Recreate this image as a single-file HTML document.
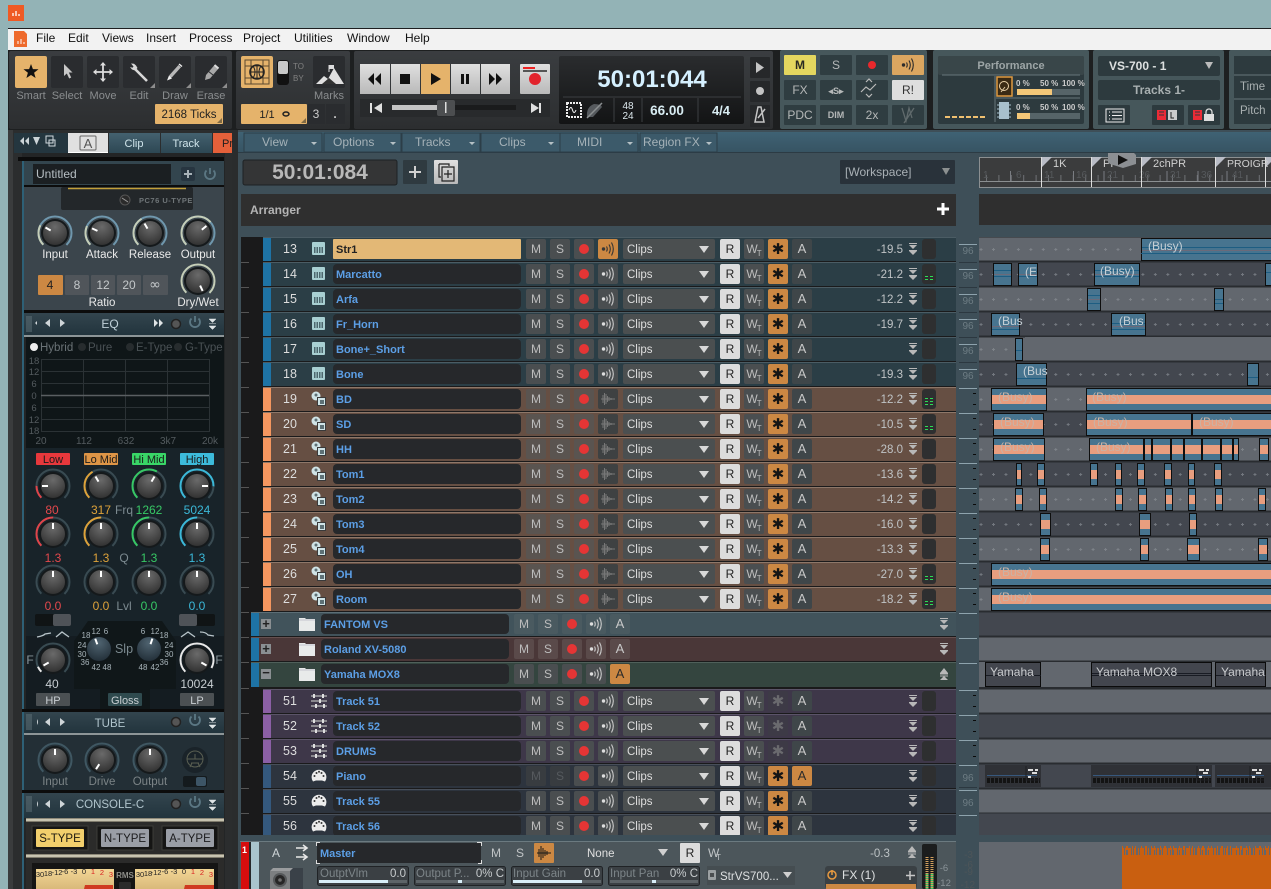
<!DOCTYPE html>
<html><head><meta charset="utf-8"><title>Console</title>
<style>
html,body{margin:0;padding:0;background:#93b3b6}
body{position:relative;width:1271px;height:889px;overflow:hidden;font-family:"Liberation Sans",sans-serif}
#s{position:absolute;left:0;top:0}
text{font-family:"Liberation Sans",sans-serif;font-size:11px;fill:#ccc}
.m{text-anchor:middle}.e{text-anchor:end}
.lb{fill:#8a8d8f;text-anchor:middle}
.pd{fill:url(#pg)}.pt2{fill:#46575b}.tb{fill:#2a2c2f}.o{fill:#e5b36b}
.gb{fill:url(#gb)}.ti{fill:#9a9a9a}
.q{fill:#2f3d41}.qt{fill:#b5b8b8;text-anchor:middle;font-size:12px}
.ri{fill:none;stroke-width:2}.pt{stroke:#fff;stroke-width:2;fill:none}
.w{fill:#e9e9e9;text-anchor:middle;font-size:11.5px}
.sc{font-size:8px;fill:#a8b4ba;text-anchor:middle}
.dk{fill:#7b8386;text-anchor:middle;font-size:11.5px}
.c{fill:#47748f;stroke:#0e0e0e;stroke-width:1}
.sal{stroke:#e89e7f;stroke-width:9;fill:none}
.ml{stroke:#1d5d82;stroke-width:1;fill:none}
.bz{font-size:12px;fill:#c6d0d6}
.bs{font-size:12px;fill:#c9b3a6}
.ya{font-size:12px;fill:#c9cbce}
.r{position:absolute;height:23px;border-top:1px solid var(--e);background:var(--g);--b:#4a4e50;box-sizing:content-box}
.r>*{position:absolute;top:1px;height:20px;font-style:normal;line-height:20px;display:block}
.t{left:263px;width:693px}.f{left:251px;width:705px}
.bl{--g:#2b3e46;--e:#4b5c64;--s:#1e73a5}
.or{--g:#664f43;--e:#8d7769;--s:#f4965f;--b:#5a5450}
.pu{--g:#3e3749;--e:#5b5468;--s:#8b5fa5}
.na{--g:#2d343e;--e:#484f59;--s:#34587d}
.fa{--g:#41535b;--e:#5c6e76;--s:#1e73a5}
.ro{--g:#4a3738;--e:#65504f;--s:#1e73a5;--b:#5a4a4a}
.ya2{--g:#34453f;--e:#4f605a;--s:#1e73a5}
.r>.st{left:0;top:0;width:8px;height:23px;background:var(--s)}
.r>.n{left:13px;width:28px;text-align:center;color:#ddd;font-size:12.5px}
.r>.ic{left:48px;top:3px;width:16px;height:16px}
.r>.nm{left:70px;width:188px;background:#26282b;border-radius:4px;color:#5c9fe6;font-weight:bold;font-size:11px;padding-left:3px;box-sizing:border-box;line-height:22px}
.r>.hl{background:#e3b876;color:#222;border-radius:1px}
.b{width:20px;background:var(--b);color:#bdbdbd;text-align:center;font-size:12px;border-radius:2px}
.a1{left:263px}.a2{left:287px}.a3{left:311px}.a4{left:335px}
.a3 u{position:absolute;left:5px;top:5px;width:10px;height:10px;border-radius:5px;background:#e53535}
.a4 svg{position:absolute;left:2px;top:2px;width:16px;height:16px}
.r>.cl{left:360px;width:92px;background:#4b4f50;color:#ddd;font-size:11.5px;padding-left:4px;box-sizing:border-box;border-radius:2px;line-height:22px}
.cl::after{content:"";position:absolute;right:6px;top:7px;border:5px solid transparent;border-top:7px solid #d8d8d8;border-bottom:0}
.r>.rr{left:457px;width:20px;background:#dcdcdc;color:#222;text-align:center;font-size:12px;border-radius:2px}
.wr{left:481px}.wr sub{font-size:8px;line-height:0;margin-left:-1px}
.r>.as{left:505px;width:20px;background:#cc8843;color:#151515;text-align:center;font-family:"DejaVu Sans",sans-serif;font-size:15px;border-radius:2px}
.r>.ag{background:#3d3a46;color:#6a6a6e}
.aa{left:529px;background:#3f4649;color:#c8c8c8;font-size:13px}
.aao{background:#cc8843!important;color:#2b2b2b!important}
.r>.v{right:53px;color:#c0c4c6;font-size:11.5px;text-align:right;line-height:22px}
.r>.ar{left:646px;top:5px;width:8px;height:12px}
.r>.mt{left:659px;width:14px;background:#2e2f30;border-radius:3px}
.l2::after,.l3::after{content:"";position:absolute;left:3px;top:15px;width:3px;height:1px;background:#2ddc55;box-shadow:5px 0 #2ddc55,0 -3px #2ddc55,5px -3px #2ddc55}
.l3::before{content:"";position:absolute;left:3px;top:9px;width:3px;height:1px;background:#2ddc55;box-shadow:5px 0 #2ddc55}
.r>.bx{left:10px;top:6px;width:10px;height:10px}
.r>.fo{left:48px;top:2px;width:16px;height:18px}
.f .aa{left:359px}
.f .ar{left:689px}
</style></head>
<body>
<svg id="s" width="1271" height="889" viewBox="0 0 1271 889" xmlns="http://www.w3.org/2000/svg">
<defs>
<linearGradient id="pg" x1="0" y1="0" x2="0" y2="1"><stop offset="0" stop-color="#3a3d40"/><stop offset="1" stop-color="#2c2e30"/></linearGradient>
<linearGradient id="gb" x1="0" y1="0" x2="0" y2="1"><stop offset="0" stop-color="#e0e0e0"/><stop offset="1" stop-color="#b9b9b9"/></linearGradient>
<linearGradient id="tab" x1="0" y1="0" x2="0" y2="1"><stop offset="0" stop-color="#44616f"/><stop offset="1" stop-color="#2d4753"/></linearGradient>
<linearGradient id="mn" x1="0" y1="0" x2="0" y2="1"><stop offset="0" stop-color="#3f6274"/><stop offset="1" stop-color="#375463"/></linearGradient>
<linearGradient id="dsp" x1="0" y1="0" x2="0" y2="1"><stop offset="0" stop-color="#2a2c2e"/><stop offset="1" stop-color="#131415"/></linearGradient>
<linearGradient id="hd" x1="0" y1="0" x2="0" y2="1"><stop offset="0" stop-color="#33454e"/><stop offset="1" stop-color="#22343d"/></linearGradient>
<linearGradient id="me" x1="0" y1="0" x2="0" y2="1"><stop offset="0" stop-color="#6f6a5c"/><stop offset=".5" stop-color="#e8e4cf"/><stop offset="1" stop-color="#5c584c"/></linearGradient>
<linearGradient id="vu" x1="0" y1="0" x2="0" y2="1"><stop offset="0" stop-color="#f2d695"/><stop offset="1" stop-color="#d9b97a"/></linearGradient>
<radialGradient id="k" cx=".5" cy=".25" r=".85"><stop offset="0" stop-color="#6a6a6a"/><stop offset="1" stop-color="#2b2b2b"/></radialGradient>
<radialGradient id="kb" cx=".5" cy=".25" r=".85"><stop offset="0" stop-color="#4f6370"/><stop offset="1" stop-color="#1e2a33"/></radialGradient>
<g id="K"><circle r="14" fill="#15191b"/><circle r="12" fill="url(#k)"/></g>
<g id="KB"><circle r="13" fill="#10171b"/><circle r="12" fill="url(#kb)"/></g>
<symbol id="sy" viewBox="0 0 16 16"><rect x="1" y="1" width="13" height="13" rx="1" fill="#a8cfd2"/><rect x="3" y="6" width="9" height="6" fill="#4d676e"/><path d="M5 6v6M7.500 6v6M10 6v6" stroke="#a8cfd2" stroke-width="1"/></symbol>
<symbol id="dr" viewBox="0 0 16 16"><circle cx="5" cy="5" r="4.500" fill="#cfe3e6"/><circle cx="5" cy="4" r="1.500" fill="#5d7075"/><rect x="6.500" y="6.500" width="8" height="8" fill="#cfe3e6" stroke="#3a3a3a"/><rect x="9" y="9" width="4" height="4" fill="#5d7075"/></symbol>
<symbol id="fa2" viewBox="0 0 16 16"><path d="M0 3h16M0 8h16M0 13h16" stroke="#b8b8b8" stroke-width="1.200"/><path d="M3 1v4M9 6v4M5 11v4M12 1v4M13 11v4" stroke="#e0e0e0" stroke-width="2"/></symbol>
<symbol id="mi" viewBox="0 0 16 16"><path d="M2 13.500A7.400 7.400 0 1 1 14 13.500L11 12.500H5z" fill="#ececec"/><circle cx="3.500" cy="8" r="1" fill="#333"/><circle cx="5.500" cy="5" r="1" fill="#333"/><circle cx="8" cy="3.800" r="1" fill="#333"/><circle cx="10.500" cy="5" r="1" fill="#333"/><circle cx="12.500" cy="8" r="1" fill="#333"/></symbol>
<symbol id="sp" viewBox="0 0 16 16"><circle cx="3.500" cy="8" r="1.700" fill="#ddd"/><path d="M6.500 5.500q1.500 2.500 0 5M9 3.500q2.600 4.500 0 9M11.500 1.500q3.600 6.500 0 13" fill="none" stroke="#ccc" stroke-width="1.100"/></symbol>
<symbol id="wv" viewBox="0 0 16 16"><path d="M1 8h14M3 4v8M4.500 2v12M6 3v10M7.500 5v6M9 6v4M11 7v2" stroke="#777" stroke-width="1"/></symbol>
<symbol id="ad" viewBox="0 0 8 12"><path d="M0 0h8v1H0zM0 2h8L4 6zM0 7h8v1H0zM0 8h8l-4 4z" fill="#b8b8b8"/></symbol>
<symbol id="au" viewBox="0 0 8 12"><path d="M4 0l4 5H0zM0 5h8v1.500H0zM0 7.500h8v1H0zM4 8l4 4H0z" fill="#b8b8b8"/></symbol>
<symbol id="fo" viewBox="0 0 16 18"><path d="M0 3h6l1 1h9v12H0z" fill="#e8eaea"/><path d="M0 5h16" stroke="#aab" stroke-width=".6"/></symbol>
<pattern id="dl" x="992" y="237" width="12.450" height="25" patternUnits="userSpaceOnUse"><path d="M0 12.500h3M1.500 11v3" stroke="#8b9097" stroke-width="1" opacity=".65"/></pattern>
</defs>

<!-- window -->
<rect width="1271" height="889" fill="#93b3b6"/>
<rect x="8" y="28" width="1263" height="861" fill="#1d1f20"/>
<rect x="8" y="29" width="1263" height="21" fill="#f2f2f2"/>
<rect x="8" y="5" width="16" height="16" fill="#ef5a24"/><path d="M13 16v-3M16 16v-5M19 16v-2" stroke="#fff" stroke-width="1.300"/>
<path d="M14 31h10l3 3v13H14z" fill="#ee6a2c"/><path d="M18 44v-3M21 44v-5M24 44v-2" stroke="#fff"/>
<g><text x="36" y="42" style="font-size:12px;fill:#111">File</text><text x="68" y="42" style="font-size:12px;fill:#111">Edit</text><text x="102" y="42" style="font-size:12px;fill:#111">Views</text><text x="146" y="42" style="font-size:12px;fill:#111">Insert</text><text x="189" y="42" style="font-size:12px;fill:#111">Process</text><text x="243" y="42" style="font-size:12px;fill:#111">Project</text><text x="294" y="42" style="font-size:12px;fill:#111">Utilities</text><text x="347" y="42" style="font-size:12px;fill:#111">Window</text><text x="405" y="42" style="font-size:12px;fill:#111">Help</text></g>

<!-- toolbar panels -->
<rect x="9" y="51" width="223" height="78" rx="2" class="pd"/>
<rect x="236" y="51" width="114" height="78" rx="2" class="pd"/>
<rect x="354" y="51" width="419" height="78" rx="2" class="pd"/>
<rect x="780" y="50" width="147" height="79" rx="2" class="pt2"/>
<rect x="933" y="50" width="156" height="79" rx="2" class="pt2"/>
<rect x="1093" y="50" width="131" height="79" rx="2" class="pt2"/>
<rect x="1229" y="50" width="42" height="79" rx="2" class="pt2"/>

<!-- tools -->
<rect x="15" y="56" width="32" height="32" rx="2" class="o"/>
<rect x="51" y="56" width="32" height="32" rx="2" class="tb"/><rect x="87" y="56" width="32" height="32" rx="2" class="tb"/><rect x="123" y="56" width="32" height="32" rx="2" class="tb"/><rect x="159" y="56" width="32" height="32" rx="2" class="tb"/><rect x="195" y="56" width="32" height="32" rx="2" class="tb"/>
<path d="M31 64l1.900 5.100 5.600.200-4.400 3.400 1.500 5.300-4.600-3-4.600 3 1.500-5.300-4.400-3.400 5.600-.200z" fill="#111"/>
<path d="M64 64v12l2.800-2.500 2.400 5 2-1-2.400-5h3.700z" fill="#c8c8c8"/>
<path d="M94 72h18M103 63v18" stroke="#ddd" stroke-width="1.800"/><path d="M103 62l3 3.500h-6zM103 82l3-3.500h-6zM93 72l3.500-3v6zM113 72l-3.500-3v6z" fill="#ddd"/>
<path d="M135 69l12 12" stroke="#d8d8d8" stroke-width="2.600"/><path d="M131 63.500l3 .3 2 1.700 1.500 2.500-2.500 2.500-3-1-2-2.500 2.500.8 1-1.300z" fill="#d8d8d8"/>
<path d="M168 79l1.500-4 9-10 2.500 2.300-9 10z" fill="#b8b8b8"/><path d="M167 80.500l2-5 3 3z" fill="#eee"/><path d="M179 64l3 2.500" stroke="#eee" stroke-width="1.400"/>
<path d="M205 80l1-5 8.500-10 4 3.500-8.500 10z" fill="#a8a8a8"/><path d="M208 71l5 4" stroke="#2a2c2f" stroke-width="1"/><path d="M214.500 65l4 3.500" stroke="#dcdcdc" stroke-width="2"/>
<path d="M155 88v-5l-5 5zM191 88v-5l-5 5zM227 88v-5l-5 5z" fill="#8d8d8d"/>
<text x="31" y="99" class="lb">Smart</text><text x="67" y="99" class="lb">Select</text><text x="103" y="99" class="lb">Move</text><text x="139" y="99" class="lb">Edit</text><text x="175" y="99" class="lb">Draw</text><text x="211" y="99" class="lb">Erase</text>
<rect x="155" y="104" width="68" height="20" rx="1" class="o"/><text x="189" y="118" class="m" style="fill:#222;font-size:11.500px">2168 Ticks</text><path d="M222 123v-5l-5 5z" fill="#806a44"/>

<!-- snap -->
<rect x="241" y="56" width="32" height="32" rx="2" class="o"/><path d="M245 60h24v24h-24zM245 66h24M245 78h24M251 60v24M263 60v24" fill="none" stroke="#5b4a2f"/><circle cx="257" cy="72" r="7" fill="none" stroke="#222" stroke-width="1.600"/><path d="M250 72h14M257 65v14M253 66q4 6 0 12M261 66q-4 6 0 12" stroke="#222" fill="none"/>
<rect x="277" y="60" width="12" height="25" rx="3" fill="#111"/><rect x="278" y="61" width="10" height="13" rx="2" fill="#c8c8c8"/>
<text x="293" y="69" style="font-size:8px;fill:#808080">TO</text><text x="293" y="81" style="font-size:8px;fill:#808080">BY</text>
<rect x="313" y="56" width="32" height="32" rx="2" class="tb"/><path d="M316 84l8-8 4 3 6-11 10 16z" fill="#e0e0e0"/><path d="M329 65v7" stroke="#ddd"/><rect x="329" y="65" width="5" height="4" fill="#ddd"/><path d="M322 84l7-6 7 6" fill="#333"/>
<text x="329" y="99" class="lb">Marks</text>
<rect x="241" y="104" width="66" height="20" rx="1" class="o"/><text x="267" y="118" class="m" style="fill:#222">1/1</text><ellipse cx="286" cy="114" rx="3" ry="2" fill="none" stroke="#222" stroke-width="1.500"/><path d="M306 123v-5l-5 5z" fill="#806a44"/>
<rect x="308" y="104" width="17" height="20" class="tb"/><rect x="326" y="104" width="19" height="20" class="tb"/>
<text x="316" y="118" class="m" style="font-size:12px">3</text><text x="335" y="118" class="m" style="font-size:12px;font-weight:bold">.</text>

<!-- transport -->
<rect x="360" y="64" width="30" height="30" class="gb"/><rect x="391" y="64" width="29" height="30" class="gb"/><rect x="421" y="64" width="29" height="30" class="o"/><rect x="451" y="64" width="29" height="30" class="gb"/><rect x="481" y="64" width="29" height="30" class="gb"/>
<path d="M374 73v12l-6-6zM381 73v12l-6-6z" fill="#111"/><rect x="400" y="74" width="10" height="10" fill="#111"/><path d="M431 73l10 6-10 6z" fill="#111"/><path d="M461 74h3v10h-3zM466 74h3v10h-3z" fill="#111"/><path d="M489 73l6 6-6 6zM496 73l6 6-6 6z" fill="#111"/>
<rect x="520" y="64" width="30" height="30" rx="1" class="gb"/><path d="M523 67h12v2h-12zM523 70h24v2h-24z" fill="#555"/><rect x="523" y="67" width="12" height="2" fill="#e22"/><circle cx="535" cy="79" r="6" fill="#e2232c"/>
<rect x="360" y="99" width="190" height="18" fill="#282a2c"/>
<path d="M370 103h2v10h-2zM382 103v10l-8-5z" fill="#e0e0e0"/><path d="M531 103l8 5-8 5zM539 103h2v10h-2z" fill="#e0e0e0"/>
<rect x="392" y="105" width="124" height="5" fill="#1a1b1c"/><rect x="392" y="105" width="46" height="5" fill="#c4c4c4"/><rect x="437" y="100" width="18" height="16" rx="2" fill="#4c4e50"/><rect x="445" y="102" width="1.500" height="11" fill="#ddd"/>

<!-- display -->
<rect x="559" y="56" width="185" height="68" rx="2" fill="url(#dsp)"/>
<text x="652" y="87" class="m" style="font-size:24px;font-weight:bold;fill:#d5f0ff">50:01:044</text>
<path d="M563 97h178" stroke="#3c3f42"/><path d="M614 98v24M698 98v24M642 98v24" stroke="#3c3f42"/>
<rect x="567" y="103" width="14" height="14" fill="none" stroke="#eee" stroke-width="2" stroke-dasharray="2 1"/><path d="M569 110q2-5 3.500 0t3.500 0" stroke="#fff" fill="none"/>
<path d="M587 117q-1-10 7-13 7 0 8 3l-9 10z" fill="#565a5e"/><path d="M587 118l15-15" stroke="#8a8e90" stroke-width="1.500"/>
<text x="628" y="109" class="m" style="font-size:10px;fill:#dbe7ec">48</text><text x="628" y="119" class="m" style="font-size:10px;fill:#dbe7ec">24</text>
<text x="667" y="115" class="m" style="font-size:13.500px;font-weight:bold;fill:#d8ecf2">66.00</text>
<text x="721" y="115" class="m" style="font-size:13px;font-weight:bold;fill:#d8ecf2">4/4</text>
<rect x="750" y="57" width="20" height="21" rx="1" fill="#26282a"/><rect x="750" y="81" width="20" height="21" rx="1" fill="#26282a"/><rect x="750" y="105" width="20" height="22" rx="1" fill="#26282a"/>
<path d="M756 62l8 5.500-8 5.500z" fill="#c4c4c4"/><circle cx="760" cy="91" r="4" fill="#c4c4c4"/><path d="M755 122l3-15h3l3 15zM758 118l7-9" fill="none" stroke="#c4c4c4" stroke-width="1.500"/>

<!-- m panel -->
<rect x="784" y="55" width="32" height="20" rx="1" fill="#e4d75f"/><text x="800" y="69" class="m" style="font-size:12px;font-weight:bold;fill:#2a2a22">M</text>
<rect x="820" y="55" width="32" height="20" rx="1" class="q"/><text x="836" y="69" class="qt">S</text>
<rect x="856" y="55" width="32" height="20" rx="1" class="q"/><circle cx="872" cy="65" r="4" fill="#e9282c"/>
<rect x="892" y="55" width="32" height="20" rx="1" fill="#dba660"/><g transform="translate(900 57)"><use href="#sp" width="16" height="16" style="filter:brightness(.2)"/></g>
<rect x="784" y="80" width="32" height="20" rx="1" class="q"/><text x="800" y="94" class="qt">FX</text>
<rect x="820" y="80" width="32" height="20" rx="1" class="q"/><text x="836" y="94" class="qt" style="font-size:9px;font-weight:bold">◂S▸</text>
<rect x="856" y="80" width="32" height="20" rx="1" class="q"/><path d="M861 92l5-5 4 3 6-6M872 82l-3-3-3 3M872 94l-3 3-3-3" fill="none" stroke="#bbb" stroke-width="1.200"/>
<rect x="892" y="80" width="32" height="20" rx="1" fill="#dedede"/><text x="908" y="94" class="m" style="font-size:12px;fill:#333">R!</text>
<rect x="784" y="105" width="32" height="20" rx="1" class="q"/><text x="800" y="119" class="qt">PDC</text>
<rect x="820" y="105" width="32" height="20" rx="1" class="q"/><text x="836" y="118" class="qt" style="font-size:9px;font-weight:bold">DIM</text>
<rect x="856" y="105" width="32" height="20" rx="1" class="q"/><text x="872" y="119" class="qt">2x</text>
<rect x="892" y="105" width="32" height="20" rx="1" class="q"/><path d="M902 108l4 13 3-13 3 10M914 108l-10 15" fill="none" stroke="#606a6c" stroke-width="1.300"/>

<!-- performance -->
<rect x="938" y="56" width="146" height="68" rx="2" fill="#2d3a3e"/><rect x="938" y="56" width="146" height="19" rx="2" fill="#394649"/>
<text x="1011" y="69" class="m" style="font-weight:bold;fill:#9da5a6">Performance</text>
<path d="M942 75h138M995 76v46M996 98h84" stroke="#66767a"/>
<path d="M945 117h5m2 0h5m2 0h5m2 0h5m2 0h5m2 0h5" stroke="#f0c070" stroke-width="2"/>
<rect x="997" y="77" width="15" height="19" fill="#3a2a14" stroke="#e09a40" stroke-width="1.500"/><circle cx="1004" cy="86" r="4.500" fill="none" stroke="#e8d0a8"/><path d="M1001 92l4-5" stroke="#e8d0a8"/>
<rect x="999" y="102" width="10" height="17" fill="#a8c0cc"/><path d="M997 105h14M997 109h14M997 113h14M997 117h14" stroke="#a8c0cc" stroke-dasharray="2 10"/>
<g><text x="1016" y="86" style="font-size:8px;font-weight:bold;fill:#ccc">0 %</text><text x="1040" y="86" style="font-size:8px;font-weight:bold;fill:#ccc">50 %</text><text x="1062" y="86" style="font-size:8px;font-weight:bold;fill:#ccc">100 %</text><text x="1016" y="110" style="font-size:8px;font-weight:bold;fill:#ccc">0 %</text><text x="1040" y="110" style="font-size:8px;font-weight:bold;fill:#ccc">50 %</text><text x="1062" y="110" style="font-size:8px;font-weight:bold;fill:#ccc">100 %</text></g>
<rect x="1017" y="89" width="63" height="6" fill="#566468"/><rect x="1017" y="89" width="35" height="6" fill="#f4c778"/>
<rect x="1017" y="113" width="63" height="6" fill="#566468"/><rect x="1017" y="113" width="13" height="6" fill="#f4c778"/>

<!-- VS -->
<rect x="1098" y="56" width="122" height="20" rx="2" fill="#2d3a3e"/><text x="1109" y="70" style="font-weight:bold;fill:#dde0e0;font-size:12px">VS-700 - 1</text><path d="M1205 62h8l-4 7z" fill="#bbb"/>
<rect x="1098" y="80" width="122" height="20" rx="2" fill="#2d3a3e"/><text x="1159" y="94" class="m" style="font-weight:bold;fill:#a9b0b1;font-size:12px">Tracks 1-</text>
<rect x="1098" y="105" width="32" height="20" rx="1" fill="#2d3a3e"/><path d="M1106 109h18v13h-18zM1109 112h1M1112 112h10M1109 115.500h1M1112 115.500h10M1109 119h1M1112 119h10" fill="none" stroke="#eee"/>
<rect x="1152" y="105" width="32" height="20" rx="1" fill="#2d3a3e"/><rect x="1188" y="105" width="32" height="20" rx="1" fill="#2d3a3e"/>
<rect x="1157" y="110" width="9" height="10" fill="#ea2b36"/><path d="M1159 112h5M1159 115h5" stroke="#2d3a3e"/><rect x="1168" y="110" width="9" height="10" fill="#ccc"/><path d="M1171 112v6h3" stroke="#222" fill="none"/>
<rect x="1193" y="110" width="9" height="10" fill="#ea2b36"/><path d="M1195 112h5M1195 115h5" stroke="#2d3a3e"/><rect x="1204" y="114" width="10" height="7" fill="#ddd"/><path d="M1206 114v-2a3 3 0 0 1 6 0v2" fill="none" stroke="#ddd" stroke-width="1.300"/>

<!-- Time -->
<rect x="1234" y="56" width="37" height="68" fill="#2d3a3e"/><path d="M1234 75h37M1234 99h37" stroke="#66767a"/>
<text x="1240" y="90" style="fill:#a9b0b1;font-size:11.500px">Time</text><text x="1240" y="114" style="fill:#a9b0b1;font-size:11.500px">Pitch</text>

<!-- main -->
<rect x="232" y="130" width="1039" height="759" fill="#3e4f58"/>
<rect x="232" y="130" width="6" height="759" fill="#2a2c2d"/>
<rect x="238" y="132" width="1033" height="20" fill="url(#mn)"/><rect x="238" y="152" width="1033" height="1" fill="#2c3b44"/>
<g>
<rect x="244" y="133" width="78" height="19" fill="#3c5a6a" stroke="#2c3e48"/><rect x="324" y="133" width="77" height="19" fill="#3c5a6a" stroke="#2c3e48"/><rect x="402" y="133" width="78" height="19" fill="#3c5a6a" stroke="#2c3e48"/><rect x="481" y="133" width="79" height="19" fill="#3c5a6a" stroke="#2c3e48"/><rect x="560" y="133" width="78" height="19" fill="#3c5a6a" stroke="#2c3e48"/><rect x="640" y="133" width="77" height="19" fill="#3c5a6a" stroke="#2c3e48"/>
<text x="262" y="146" style="font-size:12px;fill:#a5b2b8">View</text><text x="333" y="146" style="font-size:12px;fill:#a5b2b8">Options</text><text x="415" y="146" style="font-size:12px;fill:#a5b2b8">Tracks</text><text x="499" y="146" style="font-size:12px;fill:#a5b2b8">Clips</text><text x="577" y="146" style="font-size:12px;fill:#a5b2b8">MIDI</text><text x="643" y="146" style="font-size:12px;fill:#a5b2b8">Region FX</text>
<path d="M311 142h6l-3 3zM390 142h6l-3 3zM469 142h6l-3 3zM548 142h6l-3 3zM627 142h6l-3 3zM706 142h6l-3 3z" fill="#b5c0c5"/>
</g>
<rect x="243" y="160" width="154" height="25" rx="2" fill="#343536" stroke="#1d2124"/>
<text x="320" y="179" class="m" style="font-size:21px;font-weight:bold;fill:#b8b8b8">50:01:084</text>
<rect x="403" y="160" width="24" height="24" rx="1" fill="#2f3a40"/><path d="M415 166v12M409 172h12" stroke="#d0d0d0" stroke-width="2"/>
<rect x="434" y="160" width="24" height="24" rx="1" class="gb"/><path d="M439 164h10v2M439 164v13h2M442 167h12v14h-12zM448 170v8M444 174h8" fill="none" stroke="#222" stroke-width="1.200"/>
<rect x="840" y="160" width="115" height="24" rx="1" fill="#29323a"/><text x="845" y="176" style="font-size:12px;fill:#a9b0b5">[Workspace]</text><path d="M942 168h8l-4 7z" fill="#8c9090"/>
<rect x="241" y="194" width="715" height="32" fill="#2f2f2f"/><text x="250" y="214" style="font-size:12px;font-weight:bold;fill:#b4b4b4">Arranger</text><path d="M943 203v12M937 209h12" stroke="#fff" stroke-width="3"/>
<rect x="979" y="194" width="292" height="31" fill="#2f2f2f"/>

<!-- ruler -->
<rect x="979.500" y="157.500" width="292" height="30" fill="#3b3c3d" stroke="#8b8f91"/>
<path d="M979 181.500H1271" stroke="#8b8f91"/>
<path d="M986 178H1271" stroke="#6e7175" stroke-width="6" stroke-dasharray="1 11.400"/>
<path d="M1010.500 171V181M1073.500 171V181M1104 171V181M1167 171V181M1198 171V181M1227 171V181" stroke="#7a7d82"/>
<g><text x="983" y="178" style="font-size:10px;fill:#56595c">1</text><text x="1016" y="178" style="font-size:10px;fill:#56595c">6</text><text x="1044" y="178" style="font-size:10px;fill:#56595c">11</text><text x="1076" y="178" style="font-size:10px;fill:#56595c">16</text><text x="1107" y="178" style="font-size:10px;fill:#56595c">21</text><text x="1139" y="178" style="font-size:10px;fill:#56595c">26</text><text x="1170" y="178" style="font-size:10px;fill:#56595c">31</text><text x="1201" y="178" style="font-size:10px;fill:#56595c">36</text><text x="1232" y="178" style="font-size:10px;fill:#56595c">41</text></g>
<path d="M1041.500 157V187M1091.500 157V187M1141.500 157V187M1215.500 157V187M1265.500 157V187" stroke="#ddd"/>
<path d="M1042 157h10l-10 10zM1092 157h10l-10 10zM1142 157h10l-10 10zM1216 157h10l-10 10zM1266 157h5v5l-5 5z" fill="#b9bcc6"/>
<text x="1053" y="167" style="font-size:11px;fill:#d0d0d0">1K</text><text x="1103" y="167" style="font-size:11px;fill:#d0d0d0">PF</text><text x="1153" y="167" style="font-size:11px;fill:#d0d0d0">2chPR</text><text x="1227" y="167" style="font-size:10.500px;fill:#d0d0d0">PROIGR</text>
<path d="M1108 153h26l2 2v9l-13 4-13-4-2-2z" fill="#8c8f93"/><path d="M1118 155l10 5-10 5z" fill="#111"/>

<!-- track region -->
<rect x="241" y="237" width="715" height="598" fill="#1a1a1b"/>
<path d="M241 262.500h8M241 287.500h8M241 312.500h8M241 337.500h8M241 362.500h8M241 387.500h8M241 412.500h8M241 437.500h8M241 462.500h8M241 487.500h8M241 512.500h8M241 537.500h8M241 562.500h8M241 587.500h8M241 612.500h8M241 637.500h8M241 662.500h8M241 688.500h8M241 713.500h8M241 738.500h8M241 763.500h8M241 788.500h8M241 813.500h8" stroke="#555"/>

<!-- gutter -->
<path d="M959 244.500h18M959 269.500h18M959 294.500h18M959 319.500h18M959 344.500h18M959 369.500h18M959 388.500h18M959 413.500h18M959 438.500h18M959 463.500h18M959 488.500h18M959 513.500h18M959 538.500h18M959 563.500h18M959 588.500h18M959 613.500h18M959 638.500h18M959 663.500h18M959 690.500h18M959 715.500h18M959 740.500h18M959 765.500h18M959 790.500h18M959 815.500h18" stroke="#8ea3ad"/>
<path d="M959 262.500h18M959 287.500h18M959 312.500h18M959 337.500h18M959 362.500h18M959 787.500h18" stroke="#2c3840"/>
<path d="M973 393.500h3M973 404.500h3M973 418.500h3M973 429.500h3M973 443.500h3M973 454.500h3M973 468.500h3M973 479.500h3M973 493.500h3M973 504.500h3M973 518.500h3M973 529.500h3M973 543.500h3M973 554.500h3M973 568.500h3M973 579.500h3M973 593.500h3M973 604.500h3M973 695.500h3M973 706.500h3M973 720.500h3M973 731.500h3M973 745.500h3M973 756.500h3" stroke="#0a0a0a"/>
<g><text x="968" y="254" class="m" style="font-size:10px;fill:#6d7c83">96</text><text x="968" y="279" class="m" style="font-size:10px;fill:#6d7c83">96</text><text x="968" y="304" class="m" style="font-size:10px;fill:#6d7c83">96</text><text x="968" y="329" class="m" style="font-size:10px;fill:#6d7c83">96</text><text x="968" y="354" class="m" style="font-size:10px;fill:#6d7c83">96</text><text x="968" y="379" class="m" style="font-size:10px;fill:#6d7c83">96</text><text x="968" y="781" class="m" style="font-size:10px;fill:#6d7c83">96</text><text x="968" y="806" class="m" style="font-size:10px;fill:#6d7c83">96</text></g>

<!-- lanes -->
<rect x="979" y="237" width="292" height="598" fill="#292c30"/>
<path d="M979 249H1271M979 299H1271M979 349H1271M979 399H1271M979 449H1271M979 499H1271M979 549H1271M979 599H1271M979 649H1271M979 701H1271M979 751H1271M979 801H1271" stroke="#62676e" stroke-width="23"/>
<path d="M979 274H1271M979 324H1271M979 374H1271M979 424H1271M979 474H1271M979 524H1271M979 574H1271M979 624H1271M979 726H1271M979 776H1271M979 825H1271" stroke="#43474f" stroke-width="23"/>
<rect x="979" y="662" width="292" height="25" fill="#62676e"/>
<rect x="979" y="237" width="292" height="373" fill="url(#dl)"/>
<rect x="1025" y="337" width="246" height="23" fill="#62676e"/>

<!-- MIDI clips -->
<path class="c" d="M1141.500 238.500h130v22h-130zM993.500 263.500h18v22h-18zM1018.500 263.500h19v22h-19zM1094.500 263.500h45v22h-45zM1265.500 263.500h6v22h-6zM1087.500 288.500h13v22h-13zM1214.500 288.500h9v22h-9zM991.500 313.500h28v22h-28zM1111.500 313.500h34v22h-34zM1015.500 338.500h7v22h-7zM1016.500 363.500h30v22h-30zM1247.500 363.500h11v22h-11z"/>
<path class="ml" d="M1141 253.500h130M1142 247.500h130M994 270.500h17M994 276.500h17M1019 276.500h18M1095 276.500h44M1095 270.500h44M1266 272.500h5M1088 295.500h12M1088 303.500h12M1215 299.500h8M1215 303.500h8M992 329.500h27M1112 329.500h33M1112 323.500h33M1016 350.500h6M1017 378.500h29M1248 377.500h10"/>
<path d="M994 274.500h17M1019 274.500h18M1095 274.500h44M1142 250.500h130M1088 299.500h12M992 326.500h27M1112 326.500h33" stroke="#6a6a7a"/>
<text x="1148" y="250" class="bz">(Busy)</text><text x="1025" y="276" class="bz">(E</text><text x="1100" y="275" class="bz">(Busy)</text><text x="998" y="325" class="bz">(Bus</text><text x="1119" y="325" class="bz">(Bus</text><text x="1023" y="375" class="bz">(Bus</text>

<!-- audio clips -->
<path class="c" d="M991.500 388.500h55v22h-55zM1086.500 388.500h185v22h-185zM993.500 413.500h50v22h-50zM1086.500 413.500h105v22h-105zM1192.500 413.500h79v22h-79zM993.500 438.500h51v22h-51zM1089.500 438.500h54v22h-54zM1144.500 438.500h7v22h-7zM1152.500 438.500h18v22h-18zM1171.500 438.500h12v22h-12zM1184.500 438.500h17v22h-17zM1202.500 438.500h18v22h-18zM1221.500 438.500h11v22h-11zM1233.500 438.500h5v22h-5zM1259.500 438.500h9v22h-9z"/>
<path class="c" d="M1016.500 463.500h5v22h-5zM1037.500 463.500h7v22h-7zM1090.500 463.500h7v22h-7zM1115.500 463.500h6v22h-6zM1137.500 463.500h7v22h-7zM1164.500 463.500h7v22h-7zM1188.500 463.500h6v22h-6zM1214.500 463.500h7v22h-7zM1015.500 488.500h7v22h-7zM1039.500 488.500h7v22h-7zM1115.500 488.500h7v22h-7zM1138.500 488.500h8v22h-8zM1165.500 488.500h7v22h-7zM1188.500 488.500h7v22h-7zM1215.500 488.500h7v22h-7zM1258.500 488.500h7v22h-7zM1040.500 513.500h10v22h-10zM1139.500 513.500h11v22h-11zM1189.500 513.500h7v22h-7zM1040.500 538.500h9v22h-9zM1140.500 538.500h8v22h-8zM1187.500 538.500h12v22h-12zM1258.500 538.500h9v22h-9zM991.500 563.500h280v22h-280zM991.500 588.500h280v22h-280z"/>
<path class="sal" d="M992 399.500h54M1087 399.500h184M994 424.500h49M1087 424.500h104M1193 424.500h78M994 449.500h50M1090 449.500h53M1145 449.500h6M1153 449.500h17M1172 449.500h11M1185 449.500h16M1203 449.500h17M1222 449.500h10M1234 449.500h4M1260 449.500h8M1017 474.500h4M1038 474.500h6M1091 474.500h6M1116 474.500h5M1138 474.500h6M1165 474.500h6M1189 474.500h5M1215 474.500h6M1016 499.500h6M1040 499.500h6M1116 499.500h6M1139 499.500h7M1166 499.500h6M1189 499.500h6M1216 499.500h6M1259 499.500h6M1041 524.500h9M1140 524.500h10M1190 524.500h6M1041 549.500h8M1141 549.500h7M1188 549.500h11M1259 549.500h8M992 574.500h279M992 599.500h279"/>
<text x="998" y="401" class="bs">(Busy)</text><text x="1092" y="401" class="bs">(Busy)</text><text x="1000" y="426" class="bs">(Busy)</text><text x="1093" y="426" class="bs">(Busy)</text><text x="1199" y="426" class="bs">(Busy)</text><text x="1000" y="451" class="bs">(Busy)</text><text x="1096" y="451" class="bs">(Busy)</text><text x="998" y="576" class="bs">(Busy)</text><text x="998" y="601" class="bs">(Busy)</text>

<!-- Yamaha -->
<path d="M985.500 662.500h55v24h-55zM1091.500 662.500h120v24h-120zM1215.500 662.500h50v24h-50z" fill="#43464e" stroke="#0b0b0b"/>
<path d="M986 675.500h55M1092 673.500h119M1092 675.500h119M1216 675.500h50" stroke="#191c24"/>
<text x="990" y="676" class="ya">Yamaha</text><text x="1096" y="676" class="ya">Yamaha MOX8</text><text x="1221" y="676" class="ya">Yamaha</text>
<path d="M985 765h56v22h-56zM1091 765h121v22h-121zM1215 765h51v22h-51zM1266 765h5v22h-5z" fill="#2f3136"/>
<path d="M987 775.500h50M1093 775.500h118M1217 775.500h47" stroke="#37587d"/>
<path d="M987 780.500h53M1093 780.500h118M1217 780.500h48" stroke="#131313" stroke-width="5" stroke-dasharray="3 1"/>
<path d="M1026 766v14h14M1197 766v14h14M1250 766v14h14" fill="none" stroke="#1d1e22"/>
<path d="M1028 769h5v2h-5zM1035 769h3v2h-3zM1032 772h5v2h-5zM1028 776h3v2h-3zM1199 769h5v2h-5zM1206 769h3v2h-3zM1203 772h5v2h-5zM1199 776h3v2h-3zM1252 769h5v2h-5zM1259 769h3v2h-3zM1256 772h5v2h-5zM1252 776h3v2h-3z" fill="#ddd"/>

<!-- bottom lane -->
<rect x="979" y="842" width="292" height="47" fill="#62676e"/>
<rect x="979" y="835" width="292" height="7" fill="#3e4f58"/>
<rect x="1122" y="855" width="149" height="34" fill="#c95f10"/>
<path d="M1122 852H1271" stroke="#c95f10" stroke-width="8" stroke-dasharray="2 1 1 2 3 1 1 1 2 2 1 1 4 1"/>
<path d="M1122 848H1271" stroke="#c95f10" stroke-width="4" stroke-dasharray="1 3 2 4 1 2 1 5"/>
<g><text x="973" y="858" class="e" style="font-size:10px;fill:#4d5559">-3</text><text x="973" y="868" class="e" style="font-size:10px;fill:#4d5559">-6</text><text x="973" y="875" class="e" style="font-size:10px;fill:#4d5559">-9</text><text x="975" y="888" class="e" style="font-size:10px;fill:#4d5559">-12</text></g>

<!-- master -->
<rect x="240" y="841" width="716" height="48" fill="#4c565b"/><rect x="240" y="841" width="716" height="1" fill="#6b7a80"/>
<rect x="241" y="842" width="8" height="47" fill="#d60d0d"/><text x="242" y="853" style="font-size:9px;font-weight:bold;fill:#fff">1</text>
<rect x="249" y="842" width="2" height="47" fill="#26282a"/><rect x="251" y="842" width="8" height="47" fill="#a9c4cd"/>
<text x="276" y="857" class="m" style="font-size:12px;fill:#cfd5d8">A</text>
<path d="M296 848h11M303 845l4 3-4 3M307 857h-11M303 854l4 3-4 3" fill="none" stroke="#e8e8e8" stroke-width="1.600"/>
<rect x="317" y="843" width="164" height="20" rx="1" fill="#26282b"/><path d="M316.500 846v-3.500h3.500M477 842.500h4.500v3.500M481.500 860v3.500H478M320 863.500h-3.500v-3.500" stroke="#ddd" fill="none"/>
<text x="320" y="857" style="font-weight:bold;fill:#5c9fe6">Master</text>
<text x="496" y="857" class="m" style="font-size:12px;fill:#c0c4c6">M</text><text x="520" y="857" class="m" style="font-size:12px;fill:#c0c4c6">S</text>
<rect x="534" y="843" width="20" height="20" rx="1" fill="#cc8843"/><path d="M537 853h14M539 849v8M541 846v14M543 848v10M545 850v6M547 851v4" stroke="#1a1a1a"/>
<text x="587" y="857" style="font-size:11.500px;fill:#e0e0e0">None</text><path d="M658 849h10l-5 7z" fill="#d0d0d0"/>
<rect x="680" y="843" width="20" height="20" rx="1" fill="#dcdcdc"/><text x="690" y="857" class="m" style="font-size:12px;fill:#222">R</text>
<text x="708" y="857" style="font-size:12px;fill:#c0c4c6">W</text><text x="716" y="860" style="font-size:8px;fill:#c0c4c6">T</text>
<text x="880" y="857" class="m" style="fill:#bcc2c4;font-size:11.500px">-0.3</text>
<use href="#au" x="908" y="846" width="8" height="12"/>
<rect x="922" y="844" width="15" height="45" rx="2" fill="#1b1d1e"/>
<path d="M927 857V889M932 857V889" stroke="#d09f5e" stroke-width="3" stroke-dasharray="1 1"/>
<path d="M927 874V889M932 874V889" stroke="#34c060" stroke-width="3" stroke-dasharray="1 1"/>
<text x="944" y="871" class="m" style="font-size:9.500px;fill:#8a9398">-6</text><text x="944" y="886" class="m" style="font-size:9.500px;fill:#8a9398">-12</text>
<path d="M270 871l3-3h30v21h-33z" fill="#3a4148"/><path d="M270 871h20v18h-20z" fill="#7c7f81"/><path d="M270 871l3-3h20l-3 3z" fill="#9a9c9e"/><circle cx="280" cy="880" r="7" fill="#55585a"/><circle cx="280" cy="880" r="5" fill="#262626"/><circle cx="280" cy="880" r="1.800" fill="#6f6f6f"/>
<!-- sliders -->
<g>
<rect x="317.500" y="866.500" width="91" height="19" rx="2" fill="#3b4044" stroke="#202326"/><rect x="319" y="880" width="88" height="3" fill="#5d6468"/><rect x="319" y="880" width="69" height="3" fill="#d8eef8"/>
<text x="320" y="877" style="font-size:11.500px;fill:#7d8589">OutptVlm</text><text x="406" y="877" class="e" style="font-size:11.500px;fill:#c8ccce">0.0</text>
<rect x="414.500" y="866.500" width="91" height="19" rx="2" fill="#3b4044" stroke="#202326"/><rect x="416" y="880" width="88" height="3" fill="#5d6468"/><rect x="458" y="880" width="4" height="3" fill="#d8eef8"/>
<text x="416" y="877" style="font-size:11.500px;fill:#7d8589">Output P...</text><text x="504" y="877" class="e" style="font-size:11.500px;fill:#c8ccce">0% C</text>
<rect x="511.500" y="866.500" width="91" height="19" rx="2" fill="#3b4044" stroke="#202326"/><rect x="513" y="880" width="88" height="3" fill="#5d6468"/><rect x="513" y="880" width="69" height="3" fill="#d8eef8"/>
<text x="513" y="877" style="font-size:11.500px;fill:#7d8589">Input Gain</text><text x="600" y="877" class="e" style="font-size:11.500px;fill:#c8ccce">0.0</text>
<rect x="608.500" y="866.500" width="91" height="19" rx="2" fill="#3b4044" stroke="#202326"/><rect x="610" y="880" width="88" height="3" fill="#5d6468"/><rect x="652" y="880" width="4" height="3" fill="#d8eef8"/>
<text x="610" y="877" style="font-size:11.500px;fill:#7d8589">Input Pan</text><text x="698" y="877" class="e" style="font-size:11.500px;fill:#c8ccce">0% C</text>
</g>
<rect x="707" y="866" width="88" height="19" fill="#454d51"/><rect x="708" y="870" width="8" height="10" rx="1" fill="#9ba0a2"/><rect x="710" y="873" width="4" height="4" fill="#4a4e50"/>
<text x="720" y="880" style="font-size:11.500px;fill:#dde0e1">StrVS700...</text><path d="M783 872h9l-4.500 6z" fill="#d0d0d0"/>
<rect x="825" y="866" width="92" height="23" rx="3" fill="#3a4044"/><circle cx="832" cy="875" r="4" fill="none" stroke="#e89a40" stroke-width="1.500"/><path d="M832 870v5" stroke="#e89a40" stroke-width="1.500"/>
<text x="842" y="879" style="font-size:12px;fill:#dde0e1">FX (1)</text><path d="M910 871v9M906 875.500h9" stroke="#c8c8c8" stroke-width="1.500"/>
<rect x="826" y="884" width="90" height="5" fill="#cc8843"/>

<!-- inspector -->
<rect x="8" y="130" width="224" height="759" fill="#3a3c3d"/>
<rect x="13" y="130" width="219" height="759" fill="#2b2d2e"/>
<rect x="14" y="133" width="54" height="20" fill="#24363f"/>
<path d="M24 137v8l-4-4zM29 137v8l-4-4zM33 137h7l-3.500 8z" fill="#ccd4d8"/><path d="M46 136h7v7h-7zM49 140h6v6h-6z" fill="#24363f" stroke="#d0d8dc"/>
<rect x="68" y="133" width="40" height="20" fill="#e0e0e0"/><rect x="68" y="152" width="40" height="1" fill="#fff"/><rect x="80" y="136" width="16" height="14" rx="1" fill="none" stroke="#666"/><text x="88" y="148" class="m" style="font-size:13px;fill:#555">A</text>
<rect x="109" y="133" width="51" height="20" fill="url(#tab)"/><rect x="161" y="133" width="51" height="20" fill="url(#tab)"/><rect x="213" y="133" width="19" height="20" fill="#e4603a"/>
<text x="134" y="147" class="m" style="fill:#cfe4ea">Clip</text><text x="186" y="147" class="m" style="fill:#cfe4ea">Track</text><text x="222" y="147" style="fill:#1e1e1e">Pr</text>

<rect x="22" y="153" width="203" height="736" fill="#232526"/>
<rect x="18" y="157" width="206" height="4" fill="#0c0c0c"/>
<rect x="24" y="161" width="200" height="24" fill="#33454e"/>
<rect x="22" y="161" width="2" height="728" fill="#2e6076"/>
<rect x="33" y="164" width="138" height="20" fill="#1b1f22"/><text x="36" y="178" style="font-size:12px;fill:#b7bfc4">Untitled</text>
<rect x="181" y="167" width="14" height="14" rx="2" fill="#273540"/><path d="M188 170v8M184 174h8" stroke="#a8b2b8" stroke-width="2"/>
<path d="M206.500 170.500a5 5 0 1 0 7 0M210 168v6" fill="none" stroke="#5b7783" stroke-width="1.800"/>
<rect x="24" y="185" width="200" height="2" fill="#0c0c0c"/>
<!-- comp -->
<rect x="24" y="187" width="200" height="123" fill="#3b454c"/>
<rect x="61" y="187" width="132" height="23" rx="2" fill="#23272a"/><path d="M68 188.500H186" stroke="#c3a03a" stroke-width="1.500"/>
<circle cx="125" cy="200" r="5" fill="#2a2a2a" stroke="#555"/><path d="M122 198l6 4" stroke="#999"/>
<text x="139" y="203" style="font-size:7.500px;font-weight:bold;fill:#6f7578;letter-spacing:.5px">PC76 U-TYPE</text>
<g transform="translate(55 233)"><circle class="ri" r="16.500" stroke="#6f97ad" stroke-dasharray="78 104" transform="rotate(135)"/><circle class="ri" r="16.500" stroke="#c5ceb8" stroke-dasharray="21 104" transform="rotate(135)"/><use href="#K"/><path class="pt" d="M0-11V-5" transform="rotate(-60)"/></g>
<g transform="translate(102 233)"><circle class="ri" r="16.500" stroke="#6f97ad" stroke-dasharray="78 104" transform="rotate(135)"/><circle class="ri" r="16.500" stroke="#c5ceb8" stroke-dasharray="20 104" transform="rotate(135)"/><use href="#K"/><path class="pt" d="M0-11V-5" transform="rotate(-65)"/></g>
<g transform="translate(150 233)"><circle class="ri" r="16.500" stroke="#6f97ad" stroke-dasharray="78 104" transform="rotate(135)"/><circle class="ri" r="16.500" stroke="#c5ceb8" stroke-dasharray="30 104" transform="rotate(135)"/><use href="#K"/><path class="pt" d="M0-11V-5" transform="rotate(-30)"/></g>
<g transform="translate(198 233)"><circle class="ri" r="16.500" stroke="#6f97ad" stroke-dasharray="78 104" transform="rotate(135)"/><circle class="ri" r="16.500" stroke="#c5ceb8" stroke-dasharray="53 104" transform="rotate(135)"/><use href="#K"/><path class="pt" d="M0-11V-5" transform="rotate(50)"/></g>
<g transform="translate(198 281)"><circle class="ri" r="16.500" stroke="#c5ceb8" stroke-dasharray="78 104" transform="rotate(135)"/><use href="#K"/><path class="pt" d="M0-11V-5" transform="rotate(155)"/></g>
<text x="55" y="258" class="w">Input</text><text x="102" y="258" class="w">Attack</text><text x="150" y="258" class="w">Release</text><text x="198" y="258" class="w">Output</text>
<rect x="38" y="275" width="25" height="20" rx="1" fill="#cc8843"/><rect x="65" y="275" width="24" height="20" rx="1" fill="#50555a"/><rect x="91" y="275" width="24" height="20" rx="1" fill="#50555a"/><rect x="117" y="275" width="24" height="20" rx="1" fill="#50555a"/><rect x="143" y="275" width="25" height="20" rx="1" fill="#50555a"/>
<text x="50" y="289" class="m" style="font-size:12px;fill:#222">4</text><text x="77" y="289" class="m" style="font-size:12px;fill:#c4c8ca">8</text><text x="103" y="289" class="m" style="font-size:12px;fill:#c4c8ca">12</text><text x="129" y="289" class="m" style="font-size:12px;fill:#c4c8ca">20</text><text x="155" y="289" class="m" style="font-size:14px;fill:#c4c8ca;font-family:'DejaVu Sans'">∞</text>
<text x="102" y="306" class="w">Ratio</text><text x="198" y="306" class="w">Dry/Wet</text>
<rect x="24" y="310" width="200" height="3" fill="#0c0c0c"/>
<!-- eq header -->
<rect x="24" y="313" width="200" height="22" fill="url(#hd)"/><rect x="24" y="335" width="200" height="2" fill="#8d9597"/>
<path d="M26 317h6M26 319h6M26 321h6M26 323h6M26 325h6M26 327h6M26 329h6M26 331h6" stroke="#5f7178" stroke-width="1"/>
<path d="M37 321v4l-2-2zM50 319v8l-5-4zM60 319l5 4-5 4z" fill="#cfd5d8"/>
<text x="110" y="328" class="m" style="font-size:12px;fill:#c0d0d8">EQ</text>
<path d="M154 319l4 4-4 4zM159 319l4 4-4 4z" fill="#dfe4e6"/><circle cx="176" cy="324" r="4.500" fill="#555" stroke="#222" stroke-width="1.500"/>
<path d="M191.500 318.500a5 5 0 1 0 7 0M195 316v6" fill="none" stroke="#5b7783" stroke-width="1.800"/>
<path d="M209 319h7l-3.500 3.500zM209 326h7l-3.500 3.500zM209 323.800h7" fill="#dfe4e6" stroke="#dfe4e6" stroke-width=".5"/>
<!-- eq graph -->
<rect x="26" y="337" width="198" height="111" fill="#0f1618"/>
<circle cx="34" cy="347" r="4" fill="#eee"/><circle cx="82" cy="347" r="4" fill="#272c2e"/><circle cx="130" cy="347" r="4" fill="#272c2e"/><circle cx="178" cy="347" r="4" fill="#272c2e"/>
<text x="40" y="351" style="font-size:11.500px;fill:#6a7276">Hybrid</text><text x="88" y="351" style="font-size:11.500px;fill:#4a5155">Pure</text><text x="136" y="351" style="font-size:11.500px;fill:#4a5155">E-Type</text><text x="185" y="351" style="font-size:11.500px;fill:#4a5155">G-Type</text>
<path d="M41.500 359.500h168v72h-168zM41 371.500h168M41 383.500h168M41 407.500h168M41 419.500h168M83.500 359v72M125.500 359v72M167.500 359v72" fill="none" stroke="#2b3235"/>
<path d="M41 395.500h168" stroke="#5a5f62" stroke-width="1.500"/>
<g><text x="34" y="364" class="m" style="font-size:9.500px;fill:#545b5f">18</text><text x="34" y="375" class="m" style="font-size:9.500px;fill:#545b5f">12</text><text x="34" y="387" class="m" style="font-size:9.500px;fill:#545b5f">6</text><text x="34" y="399" class="m" style="font-size:9.500px;fill:#545b5f">0</text><text x="34" y="411" class="m" style="font-size:9.500px;fill:#545b5f">6</text><text x="34" y="423" class="m" style="font-size:9.500px;fill:#545b5f">12</text><text x="34" y="434" class="m" style="font-size:9.500px;fill:#545b5f">18</text>
<text x="41" y="444" class="m" style="font-size:10px;fill:#545b5f">20</text><text x="84" y="444" class="m" style="font-size:10px;fill:#545b5f">112</text><text x="126" y="444" class="m" style="font-size:10px;fill:#545b5f">632</text><text x="168" y="444" class="m" style="font-size:10px;fill:#545b5f">3k7</text><text x="210" y="444" class="m" style="font-size:10px;fill:#545b5f">20k</text></g>
<!-- eq knobs -->
<rect x="26" y="448" width="198" height="188" fill="#182329"/>
<rect x="26" y="636" width="198" height="74" fill="#141c21"/>
<path d="M74 641l14-20h74l14 20v48h-26v20h-50v-20H74z" fill="#101719"/>
<rect x="36" y="453" width="34" height="12" rx="1" fill="#e7383c"/><rect x="84" y="453" width="34" height="12" rx="1" fill="#de9546"/><rect x="132" y="453" width="34" height="12" rx="1" fill="#39d667"/><rect x="180" y="453" width="34" height="12" rx="1" fill="#3dbbdb"/>
<text x="53" y="463" class="m" style="fill:#1a1a1a">Low</text><text x="101" y="463" class="m" style="fill:#1a1a1a">Lo Mid</text><text x="149" y="463" class="m" style="fill:#1a1a1a">Hi Mid</text><text x="197" y="463" class="m" style="fill:#1a1a1a">High</text>
<g>
<g transform="translate(53 486)"><circle class="ri" r="16.500" stroke="#394b52" stroke-dasharray="78 104" transform="rotate(135)"/><circle class="ri" r="16.500" stroke="#e0444a" stroke-dasharray="13 104" transform="rotate(135)"/><use href="#K"/><path class="pt" d="M0-11V-5" transform="rotate(-90)"/></g>
<g transform="translate(101 486)"><circle class="ri" r="16.500" stroke="#394b52" stroke-dasharray="78 104" transform="rotate(135)"/><circle class="ri" r="16.500" stroke="#dda23a" stroke-dasharray="30 104" transform="rotate(135)"/><use href="#K"/><path class="pt" d="M0-11V-5" transform="rotate(-30)"/></g>
<g transform="translate(149 486)"><circle class="ri" r="16.500" stroke="#394b52" stroke-dasharray="78 104" transform="rotate(135)"/><circle class="ri" r="16.500" stroke="#37c865" stroke-dasharray="47 104" transform="rotate(135)"/><use href="#K"/><path class="pt" d="M0-11V-5" transform="rotate(30)"/></g>
<g transform="translate(197 486)"><circle class="ri" r="16.500" stroke="#394b52" stroke-dasharray="78 104" transform="rotate(135)"/><circle class="ri" r="16.500" stroke="#3bb8d8" stroke-dasharray="65 104" transform="rotate(135)"/><use href="#K"/><path class="pt" d="M0-11V-5" transform="rotate(90)"/></g>
<g transform="translate(53 534)"><circle class="ri" r="16.500" stroke="#394b52" stroke-dasharray="78 104" transform="rotate(135)"/><circle class="ri" r="16.500" stroke="#e0444a" stroke-dasharray="39 104" transform="rotate(135)"/><use href="#K"/><path class="pt" d="M0-11V-5"/></g>
<g transform="translate(101 534)"><circle class="ri" r="16.500" stroke="#394b52" stroke-dasharray="78 104" transform="rotate(135)"/><circle class="ri" r="16.500" stroke="#dda23a" stroke-dasharray="39 104" transform="rotate(135)"/><use href="#K"/><path class="pt" d="M0-11V-5"/></g>
<g transform="translate(149 534)"><circle class="ri" r="16.500" stroke="#394b52" stroke-dasharray="78 104" transform="rotate(135)"/><circle class="ri" r="16.500" stroke="#37c865" stroke-dasharray="39 104" transform="rotate(135)"/><use href="#K"/><path class="pt" d="M0-11V-5"/></g>
<g transform="translate(197 534)"><circle class="ri" r="16.500" stroke="#394b52" stroke-dasharray="78 104" transform="rotate(135)"/><circle class="ri" r="16.500" stroke="#3bb8d8" stroke-dasharray="39 104" transform="rotate(135)"/><use href="#K"/><path class="pt" d="M0-11V-5"/></g>
<g transform="translate(53 582)"><circle class="ri" r="16.500" stroke="#394b52" stroke-dasharray="78 104" transform="rotate(135)"/><use href="#K"/><path class="pt" d="M0-11V-5"/></g>
<g transform="translate(101 582)"><circle class="ri" r="16.500" stroke="#394b52" stroke-dasharray="78 104" transform="rotate(135)"/><use href="#K"/><path class="pt" d="M0-11V-5"/></g>
<g transform="translate(149 582)"><circle class="ri" r="16.500" stroke="#394b52" stroke-dasharray="78 104" transform="rotate(135)"/><use href="#K"/><path class="pt" d="M0-11V-5"/></g>
<g transform="translate(197 582)"><circle class="ri" r="16.500" stroke="#394b52" stroke-dasharray="78 104" transform="rotate(135)"/><use href="#K"/><path class="pt" d="M0-11V-5"/></g>
<g transform="translate(53 660)"><circle class="ri" r="16.500" stroke="#394b52" stroke-dasharray="78 104" transform="rotate(135)"/><circle class="ri" r="16.500" stroke="#e8e8e8" stroke-dasharray="6 104" transform="rotate(135)"/><use href="#K"/><path class="pt" d="M0-11V-5" transform="rotate(-120)"/></g>
<g transform="translate(197 660)"><circle class="ri" r="16.500" stroke="#e8e8e8" stroke-dasharray="73 104" transform="rotate(135)"/><use href="#K"/><path class="pt" d="M0-11V-5" transform="rotate(120)"/></g>
<g transform="translate(99 649)"><use href="#KB"/><path class="pt" d="M0-11V-5" transform="rotate(-20)"/></g>
<g transform="translate(149 649)"><use href="#KB"/><path class="pt" d="M0-11V-5" transform="rotate(18)"/></g>
</g>
<g>
<text x="52" y="514" class="m" style="font-size:12px;fill:#e3484c">80</text><text x="101" y="514" class="m" style="font-size:12px;fill:#dda23a">317</text><text x="124" y="514" class="m" style="font-size:12px;fill:#7c8a90">Frq</text><text x="149" y="514" class="m" style="font-size:12px;fill:#37c865">1262</text><text x="197" y="514" class="m" style="font-size:12px;fill:#3bb8d8">5024</text>
<text x="53" y="562" class="m" style="font-size:12px;fill:#e3484c">1.3</text><text x="101" y="562" class="m" style="font-size:12px;fill:#dda23a">1.3</text><text x="124" y="562" class="m" style="font-size:12px;fill:#7c8a90">Q</text><text x="149" y="562" class="m" style="font-size:12px;fill:#37c865">1.3</text><text x="197" y="562" class="m" style="font-size:12px;fill:#3bb8d8">1.3</text>
<text x="53" y="610" class="m" style="font-size:12px;fill:#e3484c">0.0</text><text x="101" y="610" class="m" style="font-size:12px;fill:#dda23a">0.0</text><text x="124" y="610" class="m" style="font-size:12px;fill:#7c8a90">Lvl</text><text x="149" y="610" class="m" style="font-size:12px;fill:#37c865">0.0</text><text x="197" y="610" class="m" style="font-size:12px;fill:#3bb8d8">0.0</text>
</g>
<rect x="35" y="614" width="36" height="12" rx="2" fill="#101415"/><rect x="53" y="614" width="18" height="12" rx="2" fill="#4f5358"/>
<rect x="179" y="614" width="36" height="12" rx="2" fill="#101415"/><rect x="179" y="614" width="18" height="12" rx="2" fill="#4f5358"/>
<path d="M37 637q6-1 8-3l6-1M56 637l6-5 7 5M181 637l7-5 7 5M200 632q6 0 8 3l6 1" fill="none" stroke="#b8c4c9" stroke-width="1.300"/>
<text x="124" y="653" class="m" style="font-size:12.500px;fill:#7c8a90">Slp</text>
<g><text x="86" y="638" class="sc">18</text><text x="96" y="634" class="sc">12</text><text x="106" y="634" class="sc">6</text><text x="82" y="648" class="sc">24</text><text x="82" y="657" class="sc">30</text><text x="85" y="665" class="sc">36</text><text x="96" y="670" class="sc">42</text><text x="107" y="670" class="sc">48</text><text x="143" y="634" class="sc">6</text><text x="155" y="634" class="sc">12</text><text x="164" y="638" class="sc">18</text><text x="169" y="648" class="sc">24</text><text x="169" y="657" class="sc">30</text><text x="164" y="665" class="sc">36</text><text x="143" y="670" class="sc">48</text><text x="155" y="670" class="sc">42</text></g>
<text x="30" y="664" class="m" style="font-size:12px;fill:#8a969c">F</text><text x="219" y="664" class="m" style="font-size:12px;fill:#8a969c">F</text>
<text x="52" y="688" class="m" style="font-size:12px;fill:#c8ced2">40</text><text x="197" y="688" class="m" style="font-size:12px;fill:#c8ced2">10024</text>
<rect x="36" y="693" width="34" height="13" rx="1" fill="#4b5053"/><text x="53" y="704" class="m" style="fill:#c8ced2">HP</text>
<rect x="108" y="693" width="34" height="13" rx="1" fill="#2f4a4e"/><text x="125" y="704" class="m" style="fill:#c8ced2">Gloss</text>
<rect x="180" y="693" width="34" height="13" rx="1" fill="#4b5053"/><text x="197" y="704" class="m" style="fill:#c8ced2">LP</text>
<rect x="22" y="709" width="202" height="3" fill="#0c0c0c"/>
<!-- tube -->
<rect x="24" y="712" width="200" height="21" fill="url(#hd)"/><rect x="24" y="733" width="200" height="2" fill="#8d9597"/>
<path d="M26 715h6M26 717h6M26 719h6M26 721h6M26 723h6M26 725h6M26 727h6M26 729h6" stroke="#5f7178"/>
<path d="M50 718v8l-5-4zM60 718l5 4-5 4zM38 719q-2 3 0 6" fill="#cfd5d8"/>
<text x="110" y="727" class="m" style="font-size:11.500px;fill:#b0c4cc">TUBE</text>
<circle cx="176" cy="722" r="4.500" fill="#555" stroke="#222" stroke-width="1.500"/><path d="M191.500 716.500a5 5 0 1 0 7 0M195 714v6" fill="none" stroke="#5b7783" stroke-width="1.800"/>
<path d="M209 718h7l-3.500 3.500zM209 725h7l-3.500 3.500zM209 722.800h7" fill="#dfe4e6" stroke="#dfe4e6" stroke-width=".5"/>
<rect x="24" y="735" width="200" height="55" fill="#232f36"/>
<g transform="translate(55 760)"><circle class="ri" r="16.500" stroke="#3f5762" stroke-dasharray="78 104" transform="rotate(135)"/><use href="#K"/><path class="pt" d="M0-11V-5"/></g>
<g transform="translate(102 760)"><circle class="ri" r="16.500" stroke="#3f5762" stroke-dasharray="78 104" transform="rotate(135)"/><use href="#K"/><path class="pt" d="M0-11V-5" transform="rotate(-147)"/></g>
<g transform="translate(150 760)"><circle class="ri" r="16.500" stroke="#3f5762" stroke-dasharray="78 104" transform="rotate(135)"/><use href="#K"/><path class="pt" d="M0-11V-5"/></g>
<text x="55" y="785" class="dk">Input</text><text x="102" y="785" class="dk">Drive</text><text x="150" y="785" class="dk">Output</text>
<circle cx="195" cy="760" r="13" fill="#1a2329"/><circle cx="195" cy="759" r="8" fill="none" stroke="#5a5f52"/><path d="M187 759h16M191 763h8M195 754v5M190 767l2-4M200 767l-2-4" stroke="#5a5f52" fill="none"/>
<rect x="183" y="776" width="24" height="11" rx="2" fill="#141a1d"/><rect x="196" y="777" width="10" height="9" rx="2" fill="#3d5566"/>
<rect x="22" y="790" width="202" height="3" fill="#0c0c0c"/>
<!-- console -->
<rect x="24" y="793" width="200" height="25" fill="url(#hd)"/>
<path d="M26 797h6M26 799h6M26 801h6M26 803h6M26 805h6M26 807h6M26 809h6M26 811h6" stroke="#5f7178"/>
<path d="M50 800v8l-5-4zM60 800l5 4-5 4zM38 801q-2 3 0 6" fill="#cfd5d8"/>
<text x="110" y="808" class="m" style="font-size:11.500px;fill:#b0c4cc">CONSOLE-C</text>
<circle cx="176" cy="804" r="4.500" fill="#555" stroke="#222" stroke-width="1.500"/><path d="M191.500 798.500a5 5 0 1 0 7 0M195 796v6" fill="none" stroke="#5b7783" stroke-width="1.800"/>
<path d="M209 800h7l-3.500 3.500zM209 807h7l-3.500 3.500zM209 804.800h7" fill="#dfe4e6" stroke="#dfe4e6" stroke-width=".5"/>
<rect x="26" y="818" width="198" height="71" fill="#2b2b2a"/>
<rect x="26" y="818" width="198" height="4" fill="url(#me)"/><rect x="26" y="854" width="198" height="4" fill="url(#me)"/>
<rect x="32" y="826" width="56" height="24" fill="#151514" stroke="#3c3c38"/><rect x="97" y="826" width="56" height="24" fill="#151514" stroke="#3c3c38"/><rect x="162" y="826" width="56" height="24" fill="#151514" stroke="#3c3c38"/>
<rect x="36" y="829" width="48" height="18" rx="1" fill="#f2cf6c"/><rect x="101" y="829" width="48" height="18" rx="1" fill="#9a9ea6"/><rect x="166" y="829" width="48" height="18" rx="1" fill="#9a9ea6"/>
<text x="60" y="842" class="m" style="font-size:11.500px;fill:#1e1a10">S-TYPE</text><text x="125" y="842" class="m" style="font-size:11.500px;fill:#1c1c1e">N-TYPE</text><text x="190" y="842" class="m" style="font-size:11.500px;fill:#1c1c1e">A-TYPE</text>
<rect x="32" y="863" width="186" height="26" fill="#151514"/>
<rect x="36" y="869" width="78" height="20" fill="url(#vu)"/><rect x="135" y="869" width="79" height="20" fill="url(#vu)"/>
<g><text x="40" y="877" class="m" style="font-size:7.500px;fill:#222">30</text><text x="48" y="876" class="m" style="font-size:7.500px;fill:#222">18</text><text x="57" y="875" class="m" style="font-size:7.500px;fill:#222">-12</text><text x="65" y="874" class="m" style="font-size:7.500px;fill:#222">-6</text><text x="74" y="874" class="m" style="font-size:7.500px;fill:#222">-3</text><text x="84" y="874" class="m" style="font-size:7.500px;fill:#222">0</text><text x="93" y="874" class="m" style="font-size:7.500px;fill:#d81e1e">1</text><text x="102" y="875" class="m" style="font-size:7.500px;fill:#d81e1e">2</text><text x="111" y="877" class="m" style="font-size:7.500px;fill:#d81e1e">3</text>
<text x="140" y="877" class="m" style="font-size:7.500px;fill:#222">30</text><text x="148" y="876" class="m" style="font-size:7.500px;fill:#222">18</text><text x="156" y="875" class="m" style="font-size:7.500px;fill:#222">-12</text><text x="165" y="874" class="m" style="font-size:7.500px;fill:#222">-6</text><text x="174" y="874" class="m" style="font-size:7.500px;fill:#222">-3</text><text x="184" y="874" class="m" style="font-size:7.500px;fill:#222">0</text><text x="193" y="874" class="m" style="font-size:7.500px;fill:#d81e1e">1</text><text x="202" y="875" class="m" style="font-size:7.500px;fill:#d81e1e">2</text><text x="211" y="877" class="m" style="font-size:7.500px;fill:#d81e1e">3</text></g>
<path d="M84 889l1-4h28v4zM184 889l1-4h29v4z" fill="#cf3a20"/>
<text x="125" y="878" class="m" style="font-size:8px;font-weight:bold;fill:#8d8d88">RMS</text><rect x="119" y="882" width="12" height="7" rx="1" fill="#2b2b2a"/>
</svg>

<div class="r t bl" style="top:237px"><i class="st"></i><i class="n">13</i><svg class="ic"><use href="#sy"/></svg><i class="nm hl">Str1</i><i class="b a1">M</i><i class="b a2">S</i><i class="b a3"><u></u></i><i class="b a4" style="background:#cc8843;color:#222"><svg style="filter:brightness(.25)"><use href="#sp"/></svg></i><i class="cl">Clips</i><i class="rr">R</i><i class="b wr">W<sub>T</sub></i><i class="as">✱</i><i class="b aa">A</i><i class="v">-19.5</i><svg class="ar"><use href="#ad"/></svg><i class="mt"></i></div>
<div class="r t bl" style="top:262px"><i class="st"></i><i class="n">14</i><svg class="ic"><use href="#sy"/></svg><i class="nm">Marcatto</i><i class="b a1">M</i><i class="b a2">S</i><i class="b a3"><u></u></i><i class="b a4"><svg><use href="#sp"/></svg></i><i class="cl">Clips</i><i class="rr">R</i><i class="b wr">W<sub>T</sub></i><i class="as">✱</i><i class="b aa">A</i><i class="v">-21.2</i><svg class="ar"><use href="#ad"/></svg><i class="mt l2"></i></div>
<div class="r t bl" style="top:287px"><i class="st"></i><i class="n">15</i><svg class="ic"><use href="#sy"/></svg><i class="nm">Arfa</i><i class="b a1">M</i><i class="b a2">S</i><i class="b a3"><u></u></i><i class="b a4"><svg><use href="#sp"/></svg></i><i class="cl">Clips</i><i class="rr">R</i><i class="b wr">W<sub>T</sub></i><i class="as">✱</i><i class="b aa">A</i><i class="v">-12.2</i><svg class="ar"><use href="#ad"/></svg><i class="mt"></i></div>
<div class="r t bl" style="top:312px"><i class="st"></i><i class="n">16</i><svg class="ic"><use href="#sy"/></svg><i class="nm">Fr_Horn</i><i class="b a1">M</i><i class="b a2">S</i><i class="b a3"><u></u></i><i class="b a4"><svg><use href="#sp"/></svg></i><i class="cl">Clips</i><i class="rr">R</i><i class="b wr">W<sub>T</sub></i><i class="as">✱</i><i class="b aa">A</i><i class="v">-19.7</i><svg class="ar"><use href="#ad"/></svg><i class="mt"></i></div>
<div class="r t bl" style="top:337px"><i class="st"></i><i class="n">17</i><svg class="ic"><use href="#sy"/></svg><i class="nm">Bone+_Short</i><i class="b a1">M</i><i class="b a2">S</i><i class="b a3"><u></u></i><i class="b a4"><svg><use href="#sp"/></svg></i><i class="cl">Clips</i><i class="rr">R</i><i class="b wr">W<sub>T</sub></i><i class="as">✱</i><i class="b aa">A</i><svg class="ar"><use href="#ad"/></svg><i class="mt"></i></div>
<div class="r t bl" style="top:362px"><i class="st"></i><i class="n">18</i><svg class="ic"><use href="#sy"/></svg><i class="nm">Bone</i><i class="b a1">M</i><i class="b a2">S</i><i class="b a3"><u></u></i><i class="b a4"><svg><use href="#sp"/></svg></i><i class="cl">Clips</i><i class="rr">R</i><i class="b wr">W<sub>T</sub></i><i class="as">✱</i><i class="b aa">A</i><i class="v">-19.3</i><svg class="ar"><use href="#ad"/></svg><i class="mt"></i></div>
<div class="r t or" style="top:387px"><i class="st"></i><i class="n">19</i><svg class="ic"><use href="#dr"/></svg><i class="nm">BD</i><i class="b a1">M</i><i class="b a2">S</i><i class="b a3"><u></u></i><i class="b a4" style="background:#3e4142"><svg><use href="#wv"/></svg></i><i class="cl">Clips</i><i class="rr">R</i><i class="b wr" style="background:#4a4e50">W<sub>T</sub></i><i class="as">✱</i><i class="b aa">A</i><i class="v">-12.2</i><svg class="ar"><use href="#ad"/></svg><i class="mt l3"></i></div>
<div class="r t or" style="top:412px"><i class="st"></i><i class="n">20</i><svg class="ic"><use href="#dr"/></svg><i class="nm">SD</i><i class="b a1">M</i><i class="b a2">S</i><i class="b a3"><u></u></i><i class="b a4" style="background:#3e4142"><svg><use href="#wv"/></svg></i><i class="cl">Clips</i><i class="rr">R</i><i class="b wr" style="background:#4a4e50">W<sub>T</sub></i><i class="as">✱</i><i class="b aa">A</i><i class="v">-10.5</i><svg class="ar"><use href="#ad"/></svg><i class="mt l2"></i></div>
<div class="r t or" style="top:437px"><i class="st"></i><i class="n">21</i><svg class="ic"><use href="#dr"/></svg><i class="nm">HH</i><i class="b a1">M</i><i class="b a2">S</i><i class="b a3"><u></u></i><i class="b a4" style="background:#3e4142"><svg><use href="#wv"/></svg></i><i class="cl">Clips</i><i class="rr">R</i><i class="b wr" style="background:#4a4e50">W<sub>T</sub></i><i class="as">✱</i><i class="b aa">A</i><i class="v">-28.0</i><svg class="ar"><use href="#ad"/></svg><i class="mt"></i></div>
<div class="r t or" style="top:462px"><i class="st"></i><i class="n">22</i><svg class="ic"><use href="#dr"/></svg><i class="nm">Tom1</i><i class="b a1">M</i><i class="b a2">S</i><i class="b a3"><u></u></i><i class="b a4" style="background:#3e4142"><svg><use href="#wv"/></svg></i><i class="cl">Clips</i><i class="rr">R</i><i class="b wr" style="background:#4a4e50">W<sub>T</sub></i><i class="as">✱</i><i class="b aa">A</i><i class="v">-13.6</i><svg class="ar"><use href="#ad"/></svg><i class="mt"></i></div>
<div class="r t or" style="top:487px"><i class="st"></i><i class="n">23</i><svg class="ic"><use href="#dr"/></svg><i class="nm">Tom2</i><i class="b a1">M</i><i class="b a2">S</i><i class="b a3"><u></u></i><i class="b a4" style="background:#3e4142"><svg><use href="#wv"/></svg></i><i class="cl">Clips</i><i class="rr">R</i><i class="b wr" style="background:#4a4e50">W<sub>T</sub></i><i class="as">✱</i><i class="b aa">A</i><i class="v">-14.2</i><svg class="ar"><use href="#ad"/></svg><i class="mt"></i></div>
<div class="r t or" style="top:512px"><i class="st"></i><i class="n">24</i><svg class="ic"><use href="#dr"/></svg><i class="nm">Tom3</i><i class="b a1">M</i><i class="b a2">S</i><i class="b a3"><u></u></i><i class="b a4" style="background:#3e4142"><svg><use href="#wv"/></svg></i><i class="cl">Clips</i><i class="rr">R</i><i class="b wr" style="background:#4a4e50">W<sub>T</sub></i><i class="as">✱</i><i class="b aa">A</i><i class="v">-16.0</i><svg class="ar"><use href="#ad"/></svg><i class="mt"></i></div>
<div class="r t or" style="top:537px"><i class="st"></i><i class="n">25</i><svg class="ic"><use href="#dr"/></svg><i class="nm">Tom4</i><i class="b a1">M</i><i class="b a2">S</i><i class="b a3"><u></u></i><i class="b a4" style="background:#3e4142"><svg><use href="#wv"/></svg></i><i class="cl">Clips</i><i class="rr">R</i><i class="b wr" style="background:#4a4e50">W<sub>T</sub></i><i class="as">✱</i><i class="b aa">A</i><i class="v">-13.3</i><svg class="ar"><use href="#ad"/></svg><i class="mt"></i></div>
<div class="r t or" style="top:562px"><i class="st"></i><i class="n">26</i><svg class="ic"><use href="#dr"/></svg><i class="nm">OH</i><i class="b a1">M</i><i class="b a2">S</i><i class="b a3"><u></u></i><i class="b a4" style="background:#3e4142"><svg><use href="#wv"/></svg></i><i class="cl">Clips</i><i class="rr">R</i><i class="b wr" style="background:#4a4e50">W<sub>T</sub></i><i class="as">✱</i><i class="b aa">A</i><i class="v">-27.0</i><svg class="ar"><use href="#ad"/></svg><i class="mt l2"></i></div>
<div class="r t or" style="top:587px"><i class="st"></i><i class="n">27</i><svg class="ic"><use href="#dr"/></svg><i class="nm">Room</i><i class="b a1">M</i><i class="b a2">S</i><i class="b a3"><u></u></i><i class="b a4" style="background:#3e4142"><svg><use href="#wv"/></svg></i><i class="cl">Clips</i><i class="rr">R</i><i class="b wr" style="background:#4a4e50">W<sub>T</sub></i><i class="as">✱</i><i class="b aa">A</i><i class="v">-18.2</i><svg class="ar"><use href="#ad"/></svg><i class="mt l2"></i></div>

<div class="r f fa" style="top:612px"><i class="st"></i><i class="bx" style="background:#8a8f92;color:#222;font-size:13px;line-height:10px;text-align:center;font-weight:bold">+</i><svg class="fo"><use href="#fo"/></svg><i class="nm">FANTOM VS</i><i class="b a1" style="background:#4a5a60">M</i><i class="b a2" style="background:#4a5a60">S</i><i class="b a3" style="background:#4a5a60"><u></u></i><i class="b a4" style="background:#4a5a60"><svg><use href="#sp"/></svg></i><i class="b aa" style="background:#4a5a60">A</i><svg class="ar"><use href="#ad"/></svg></div>
<div class="r f ro" style="top:637px"><i class="st"></i><i class="bx" style="background:#8a8f92;color:#222;font-size:13px;line-height:10px;text-align:center;font-weight:bold">+</i><svg class="fo"><use href="#fo"/></svg><i class="nm">Roland XV-5080</i><i class="b a1">M</i><i class="b a2">S</i><i class="b a3"><u></u></i><i class="b a4"><svg><use href="#sp"/></svg></i><i class="b aa" style="background:#5a4a4a">A</i><svg class="ar"><use href="#ad"/></svg></div>
<div class="r f ya2" style="top:662px;height:24px"><i class="st" style="height:24px"></i><i class="bx" style="background:#8a8f92;color:#222;font-size:13px;line-height:8px;text-align:center;font-weight:bold">−</i><svg class="fo"><use href="#fo"/></svg><i class="nm">Yamaha MOX8</i><i class="b a1">M</i><i class="b a2">S</i><i class="b a3"><u></u></i><i class="b a4"><svg><use href="#sp"/></svg></i><i class="b aa aao">A</i><svg class="ar"><use href="#au"/></svg></div>

<div class="r t pu" style="top:689px"><i class="st"></i><i class="n">51</i><svg class="ic"><use href="#fa2"/></svg><i class="nm">Track 51</i><i class="b a1">M</i><i class="b a2">S</i><i class="b a3"><u></u></i><i class="b a4"><svg><use href="#sp"/></svg></i><i class="cl">Clips</i><i class="rr">R</i><i class="b wr">W<sub>T</sub></i><i class="as ag">✱</i><i class="b aa">A</i><svg class="ar"><use href="#ad"/></svg><i class="mt"></i></div>
<div class="r t pu" style="top:714px"><i class="st"></i><i class="n">52</i><svg class="ic"><use href="#fa2"/></svg><i class="nm">Track 52</i><i class="b a1">M</i><i class="b a2">S</i><i class="b a3"><u></u></i><i class="b a4"><svg><use href="#sp"/></svg></i><i class="cl">Clips</i><i class="rr">R</i><i class="b wr">W<sub>T</sub></i><i class="as ag">✱</i><i class="b aa">A</i><svg class="ar"><use href="#ad"/></svg><i class="mt"></i></div>
<div class="r t pu" style="top:739px"><i class="st"></i><i class="n">53</i><svg class="ic"><use href="#fa2"/></svg><i class="nm">DRUMS</i><i class="b a1">M</i><i class="b a2">S</i><i class="b a3"><u></u></i><i class="b a4"><svg><use href="#sp"/></svg></i><i class="cl">Clips</i><i class="rr">R</i><i class="b wr">W<sub>T</sub></i><i class="as ag">✱</i><i class="b aa">A</i><svg class="ar"><use href="#ad"/></svg><i class="mt"></i></div>
<div class="r t na" style="top:764px"><i class="st"></i><i class="n">54</i><svg class="ic"><use href="#mi"/></svg><i class="nm">Piano</i><i class="b a1" style="background:#383c40;color:#565a5e">M</i><i class="b a2" style="background:#383c40;color:#565a5e">S</i><i class="b a3"><u></u></i><i class="b a4"><svg><use href="#sp"/></svg></i><i class="cl">Clips</i><i class="rr">R</i><i class="b wr">W<sub>T</sub></i><i class="as">✱</i><i class="b aa aao">A</i><svg class="ar"><use href="#ad"/></svg><i class="mt"></i></div>
<div class="r t na" style="top:789px"><i class="st"></i><i class="n">55</i><svg class="ic"><use href="#mi"/></svg><i class="nm">Track 55</i><i class="b a1">M</i><i class="b a2">S</i><i class="b a3"><u></u></i><i class="b a4"><svg><use href="#sp"/></svg></i><i class="cl">Clips</i><i class="rr">R</i><i class="b wr">W<sub>T</sub></i><i class="as">✱</i><i class="b aa">A</i><svg class="ar"><use href="#ad"/></svg><i class="mt"></i></div>
<div class="r t na" style="top:814px;height:20px;overflow:hidden"><i class="st"></i><i class="n">56</i><svg class="ic"><use href="#mi"/></svg><i class="nm">Track 56</i><i class="b a1">M</i><i class="b a2">S</i><i class="b a3"><u></u></i><i class="b a4"><svg><use href="#sp"/></svg></i><i class="cl">Clips</i><i class="rr">R</i><i class="b wr">W<sub>T</sub></i><i class="as">✱</i><i class="b aa">A</i><svg class="ar"><use href="#ad"/></svg><i class="mt"></i></div>
</body></html>
